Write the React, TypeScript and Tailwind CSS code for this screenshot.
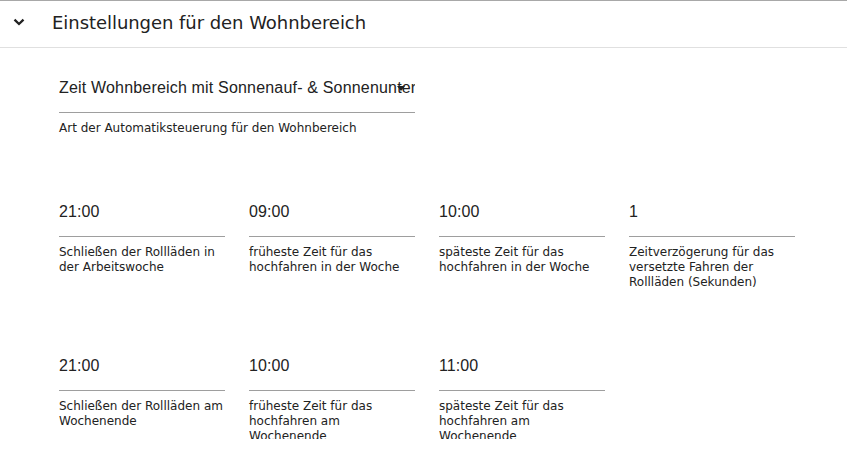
import React from "react";

const fields = [
  { v: "21:00", l: "Schließen der Rollläden in der Arbeitswoche" },
  { v: "09:00", l: "früheste Zeit für das hochfahren in der Woche" },
  { v: "10:00", l: "späteste Zeit für das hochfahren in der Woche" },
  { v: "1", l: "Zeitverzögerung für das versetzte Fahren der Rollläden (Sekunden)" },
  { v: "21:00", l: "Schließen der Rollläden am Wochenende" },
  { v: "10:00", l: "früheste Zeit für das hochfahren am Wochenende" },
  { v: "11:00", l: "späteste Zeit für das hochfahren am Wochenende" },
];

export default function App() {
  return (
    <div className="w-[847px] h-[467px] bg-white text-[#222]">
      <div className="h-[439px] overflow-hidden border-t border-[#a8a8a8]">
        <div className="h-[47px] flex items-center border-b border-[#e0e0e0]">
          <div className="w-[52px] flex pl-[13px] -mt-[5px]">
            <svg width="12" height="8" viewBox="0 0 12 8">
              <polyline points="1.5,1.6 6,6 10.5,1.6" fill="none" stroke="#222" strokeWidth="2.3" />
            </svg>
          </div>
          <div className="text-[18px] -mt-[4px] font-['DejaVu_Sans',sans-serif] tracking-[-0.05px]">
            Einstellungen für den Wohnbereich
          </div>
        </div>
        <div className="pl-[59px]">
          <div className="w-[356px] mt-[30px]">
            <div className="relative border-b border-[#9e9e9e] pb-[14px]">
              <div className="overflow-hidden whitespace-nowrap text-[16px] leading-[20px] tracking-[0.18px] font-['Liberation_Sans',sans-serif]">
                Zeit Wohnbereich mit Sonnenauf- &amp; Sonnenuntergang
              </div>
              <div className="absolute right-[10px] top-[8px] w-0 h-0 border-l-[4px] border-r-[4px] border-t-[5px] border-l-transparent border-r-transparent border-t-[#222]" />
            </div>
            <div className="mt-[8px] text-[12px] leading-[15px] font-['DejaVu_Sans',sans-serif]">
              Art der Automatiksteuerung für den Wohnbereich
            </div>
          </div>
          <div className="mt-[66px] grid grid-cols-[166px_166px_166px_166px] gap-x-[24px]">
            {fields.map((f, i) => (
              <div key={i} className="h-[154px]">
                <div className="border-b border-[#9e9e9e] pb-[14px] text-[16px] leading-[20px] tracking-[0.1px] font-['Liberation_Sans',sans-serif]">
                  {f.v}
                </div>
                <div className="mt-[8px] text-[12px] leading-[15px] font-['DejaVu_Sans',sans-serif]">
                  {f.l}
                </div>
              </div>
            ))}
          </div>
        </div>
      </div>
    </div>
  );
}
